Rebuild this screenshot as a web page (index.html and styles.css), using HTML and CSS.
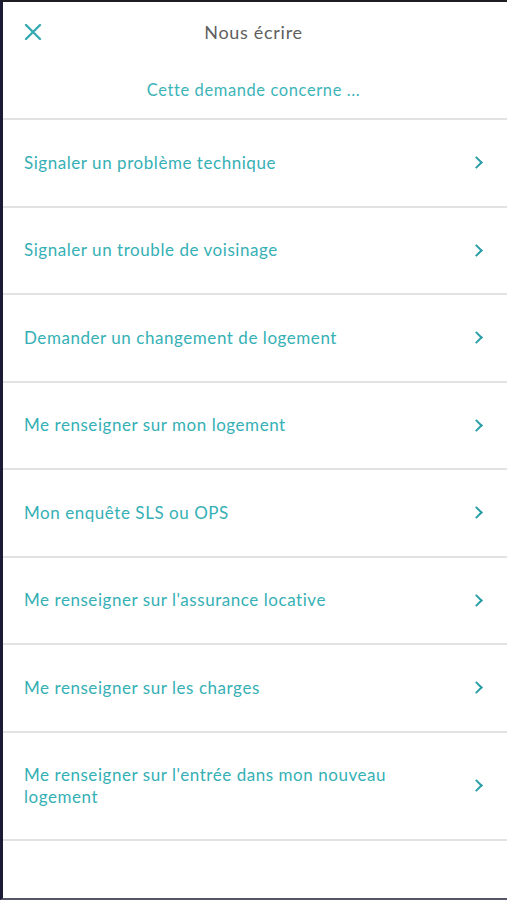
FILE: index.html
```html
<!DOCTYPE html>
<html lang="fr">
<head>
    <meta charset="UTF-8">
    <title>Nous écrire</title>
    <link rel="stylesheet" href="styles.css">
</head>
<body>
<div class="screen">
    <div class="top">
        <span class="close">
            <svg width="18" height="18" viewBox="0 0 18 18"><path d="M2 2L16 16M16 2L2 16" stroke="#35aab2" stroke-width="2.4" stroke-linecap="round"/></svg>
        </span>
        <h1 class="title">Nous écrire</h1>
    </div>
    <p class="intro">Cette demande concerne ...</p>
    <ul class="list">
        <li><span>Signaler un problème technique</span><i class="chev"></i></li>
        <li><span>Signaler un trouble de voisinage</span><i class="chev"></i></li>
        <li><span>Demander un changement de logement</span><i class="chev"></i></li>
        <li><span>Me renseigner sur mon logement</span><i class="chev"></i></li>
        <li><span>Mon enquête SLS ou OPS</span><i class="chev"></i></li>
        <li><span>Me renseigner sur l'assurance locative</span><i class="chev"></i></li>
        <li><span>Me renseigner sur les charges</span><i class="chev"></i></li>
        <li class="tall"><span>Me renseigner sur l'entrée dans mon nouveau logement</span><i class="chev"></i></li>
    </ul>
</div>
</body>
</html>
```

FILE: styles.css
```css
* {
    margin: 0;
    padding: 0;
    box-sizing: border-box;
}
body {
    background: #fff;
    font-family: Lato, "Open Sans", sans-serif;
}
.screen {
    height: 900px;
    border-left: 3px solid #1b1b36;
    border-top: 2px solid #1d1d24;
    border-bottom: 2px solid #55556a;
    display: flex;
    flex-direction: column;
}
.top {
    height: 60px;
    display: flex;
    align-items: center;
    position: relative;
}
.close {
    position: absolute;
    left: 21px;
    top: 21px;
    line-height: 0;
}
.title {
    flex: 1;
    text-align: center;
    font-weight: normal;
    font-size: 18px;
    letter-spacing: 0.7px;
    color: #5f5f5f;
    padding-right: 3px;
}
.intro {
    height: 58px;
    text-align: center;
    color: #3db4b8;
    font-size: 16.5px;
    letter-spacing: 0.6px;
    padding-top: 18px;
    padding-right: 3px;
    border-bottom: 2px solid #e2e2e2;
}
.list {
    list-style: none;
}
.list li {
    height: 87.5px;
    display: flex;
    align-items: center;
    justify-content: space-between;
    padding: 0 26px 0 21px;
    border-bottom: 2px solid #e2e2e2;
    color: #35b0b5;
    font-size: 17px;
    letter-spacing: 0.55px;
    line-height: 22px;
}
.list li.tall {
    height: 108px;
}
.list li span {
    max-width: 380px;
}
.chev {
    width: 9px;
    height: 9px;
    border-top: 2.5px solid #2a9ea6;
    border-right: 2.5px solid #2a9ea6;
    transform: rotate(45deg);
    flex-shrink: 0;
}
```
